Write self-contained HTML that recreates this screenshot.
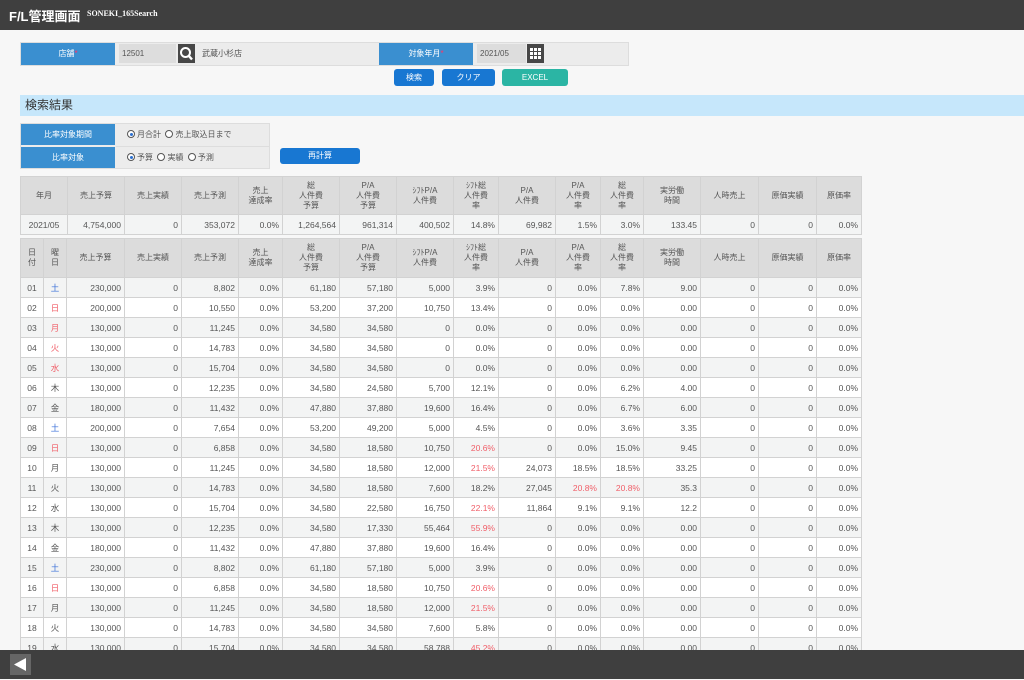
<!DOCTYPE html>
<html><head><meta charset="utf-8">
<style>
*{box-sizing:border-box;margin:0;padding:0}
body{width:1024px;height:679px;overflow:hidden;background:#f7f7f7;font-family:"Liberation Sans","Noto Sans CJK JP",sans-serif;color:#555;position:relative}
.top{position:absolute;left:0;top:0;width:1024px;height:30px;background:#3f3f3f;color:#fff}
.top .t{position:absolute;left:9px;top:6px;font-size:13px;font-weight:bold}
.top .s{position:absolute;left:87px;top:9px;font-size:8px;font-weight:bold;font-family:"Liberation Serif",serif}
.abs{position:absolute}
.lbl{background:#3a8fd0;color:#fff;font-size:8px;text-align:center}
.lbl i{color:#f36;font-style:normal}
.btn{position:absolute;border-radius:3px;color:#fff;font-size:8px;text-align:center;line-height:17px}
.main{position:absolute;left:0;top:30px;width:1024px;height:620px;overflow:hidden}
table{border-collapse:collapse;table-layout:fixed;position:absolute;left:20px;font-size:8.5px}
td,th{border:1px solid #d2d2d2;padding:0 3px;white-space:nowrap;overflow:hidden}
th{background:#dcdcdc;font-weight:normal;line-height:10px;text-align:center;color:#555;font-size:8px}
td{height:20px;text-align:right}
tr.g td{background:#f3f4f4}
tr.w td{background:#fff}
td.c{text-align:center}
.r{color:#f0606a}.b{color:#3a6fd8}
.foot{position:absolute;left:0;top:650px;width:1024px;height:29px;background:#3f3f3f}
.radio{display:inline-block;width:8px;height:8px;border:1px solid #555;border-radius:50%;vertical-align:-1px;margin-right:2px;position:relative;background:#fff}
.radio.on::after{content:"";position:absolute;left:1.5px;top:1.5px;width:3px;height:3px;border-radius:50%;background:#2a6fd0}
</style></head><body>
<div class="top"><span class="t">F/L管理画面</span><span class="s">SONEKI_165Search</span></div>

<div class="abs" style="left:20px;top:42px;width:609px;height:24px;background:#ececec;border:1px solid #ddd"></div>
<div class="abs lbl" style="left:21px;top:43px;width:94px;height:22px;line-height:22px">店舗<i>*</i></div>
<div class="abs" style="left:119px;top:44px;width:57px;height:19px;background:#ddd;font-size:8px;line-height:19px;padding-left:3px">12501</div>
<div class="abs" style="left:178px;top:44px;width:17px;height:19px;background:#474747">
<svg width="17" height="19" viewBox="0 0 17 19"><circle cx="7.5" cy="8.5" r="4.5" fill="none" stroke="#fff" stroke-width="2"/><line x1="10.5" y1="11.5" x2="14" y2="15.5" stroke="#fff" stroke-width="2.4"/></svg></div>
<div class="abs" style="left:202px;top:44px;font-size:8px;line-height:19px">武蔵小杉店</div>
<div class="abs lbl" style="left:379px;top:43px;width:94px;height:22px;line-height:22px">対象年月<i>*</i></div>
<div class="abs" style="left:477px;top:44px;width:49px;height:19px;background:#ddd;font-size:8px;line-height:19px;padding-left:3px">2021/05</div>
<div class="abs" style="left:527px;top:44px;width:17px;height:19px;background:#474747">
<svg width="17" height="19" viewBox="0 0 17 19" fill="#fff"><rect x="3" y="4" width="3" height="3"/><rect x="7" y="4" width="3" height="3"/><rect x="11" y="4" width="3" height="3"/><rect x="3" y="8" width="3" height="3"/><rect x="7" y="8" width="3" height="3"/><rect x="11" y="8" width="3" height="3"/><rect x="3" y="12" width="3" height="3"/><rect x="7" y="12" width="3" height="3"/><rect x="11" y="12" width="3" height="3"/></svg></div>

<div class="btn" style="left:394px;top:69px;width:40px;height:17px;background:#1877d2">検索</div>
<div class="btn" style="left:442px;top:69px;width:53px;height:17px;background:#1877d2">クリア</div>
<div class="btn" style="left:502px;top:69px;width:66px;height:17px;background:#2bb5a4">EXCEL</div>

<div class="abs" style="left:20px;top:95px;width:1004px;height:21px;background:#c6e7fb;font-size:12px;line-height:21px;padding-left:5px;color:#333">検索結果</div>

<div class="abs" style="left:20px;top:123px;width:250px;height:46px;background:#ececec;border:1px solid #ddd"></div>
<div class="abs lbl" style="left:21px;top:124px;width:94px;height:21px;line-height:21px">比率対象期間</div>
<div class="abs lbl" style="left:21px;top:147px;width:94px;height:21px;line-height:21px">比率対象</div>
<div class="abs" style="left:116px;top:146px;width:154px;height:1px;background:#ddd"></div>
<div class="abs" style="left:127px;top:124px;font-size:8px;line-height:21px"><span class="radio on"></span>月合計 &nbsp;<span class="radio"></span>売上取込日まで</div>
<div class="abs" style="left:127px;top:147px;font-size:8px;line-height:21px"><span class="radio on"></span>予算 &nbsp;<span class="radio"></span>実績 &nbsp;<span class="radio"></span>予測</div>
<div class="btn" style="left:280px;top:148px;width:80px;height:16px;line-height:16px;background:#1877d2">再計算</div>

<div class="main">
<table style="top:146px;width:841px">
<colgroup><col style="width:47px"><col style="width:57px"><col style="width:57px"><col style="width:57px"><col style="width:44px"><col style="width:57px"><col style="width:57px"><col style="width:57px"><col style="width:45px"><col style="width:57px"><col style="width:45px"><col style="width:43px"><col style="width:57px"><col style="width:58px"><col style="width:58px"><col style="width:45px"></colgroup>
<tr style="height:38px"><th>年月</th><th>売上予算</th><th>売上実績</th><th>売上予測</th><th>売上<br>達成率</th><th>総<br>人件費<br>予算</th><th>P/A<br>人件費<br>予算</th><th>ｼﾌﾄP/A<br>人件費</th><th>ｼﾌﾄ総<br>人件費<br>率</th><th>P/A<br>人件費</th><th>P/A<br>人件費<br>率</th><th>総<br>人件費<br>率</th><th>実労働<br>時間</th><th>人時売上</th><th>原価実績</th><th>原価率</th></tr>
<tr class="g"><td class="c">2021/05</td><td>4,754,000</td><td>0</td><td>353,072</td><td>0.0%</td><td>1,264,564</td><td>961,314</td><td>400,502</td><td>14.8%</td><td>69,982</td><td>1.5%</td><td>3.0%</td><td>133.45</td><td>0</td><td>0</td><td>0.0%</td></tr>
</table>

<table style="top:208px;width:841px">
<colgroup><col style="width:23px"><col style="width:23px"><col style="width:58px"><col style="width:57px"><col style="width:57px"><col style="width:44px"><col style="width:57px"><col style="width:57px"><col style="width:57px"><col style="width:45px"><col style="width:57px"><col style="width:45px"><col style="width:43px"><col style="width:57px"><col style="width:58px"><col style="width:58px"><col style="width:45px"></colgroup>
<tr style="height:39px"><th>日<br>付</th><th>曜<br>日</th><th>売上予算</th><th>売上実績</th><th>売上予測</th><th>売上<br>達成率</th><th>総<br>人件費<br>予算</th><th>P/A<br>人件費<br>予算</th><th>ｼﾌﾄP/A<br>人件費</th><th>ｼﾌﾄ総<br>人件費<br>率</th><th>P/A<br>人件費</th><th>P/A<br>人件費<br>率</th><th>総<br>人件費<br>率</th><th>実労働<br>時間</th><th>人時売上</th><th>原価実績</th><th>原価率</th></tr>
<tr class="g"><td class="c">01</td><td class="c b">土</td><td>230,000</td><td>0</td><td>8,802</td><td>0.0%</td><td>61,180</td><td>57,180</td><td>5,000</td><td>3.9%</td><td>0</td><td>0.0%</td><td>7.8%</td><td>9.00</td><td>0</td><td>0</td><td>0.0%</td></tr>
<tr class="w"><td class="c">02</td><td class="c r">日</td><td>200,000</td><td>0</td><td>10,550</td><td>0.0%</td><td>53,200</td><td>37,200</td><td>10,750</td><td>13.4%</td><td>0</td><td>0.0%</td><td>0.0%</td><td>0.00</td><td>0</td><td>0</td><td>0.0%</td></tr>
<tr class="g"><td class="c">03</td><td class="c r">月</td><td>130,000</td><td>0</td><td>11,245</td><td>0.0%</td><td>34,580</td><td>34,580</td><td>0</td><td>0.0%</td><td>0</td><td>0.0%</td><td>0.0%</td><td>0.00</td><td>0</td><td>0</td><td>0.0%</td></tr>
<tr class="w"><td class="c">04</td><td class="c r">火</td><td>130,000</td><td>0</td><td>14,783</td><td>0.0%</td><td>34,580</td><td>34,580</td><td>0</td><td>0.0%</td><td>0</td><td>0.0%</td><td>0.0%</td><td>0.00</td><td>0</td><td>0</td><td>0.0%</td></tr>
<tr class="g"><td class="c">05</td><td class="c r">水</td><td>130,000</td><td>0</td><td>15,704</td><td>0.0%</td><td>34,580</td><td>34,580</td><td>0</td><td>0.0%</td><td>0</td><td>0.0%</td><td>0.0%</td><td>0.00</td><td>0</td><td>0</td><td>0.0%</td></tr>
<tr class="w"><td class="c">06</td><td class="c">木</td><td>130,000</td><td>0</td><td>12,235</td><td>0.0%</td><td>34,580</td><td>24,580</td><td>5,700</td><td>12.1%</td><td>0</td><td>0.0%</td><td>6.2%</td><td>4.00</td><td>0</td><td>0</td><td>0.0%</td></tr>
<tr class="g"><td class="c">07</td><td class="c">金</td><td>180,000</td><td>0</td><td>11,432</td><td>0.0%</td><td>47,880</td><td>37,880</td><td>19,600</td><td>16.4%</td><td>0</td><td>0.0%</td><td>6.7%</td><td>6.00</td><td>0</td><td>0</td><td>0.0%</td></tr>
<tr class="w"><td class="c">08</td><td class="c b">土</td><td>200,000</td><td>0</td><td>7,654</td><td>0.0%</td><td>53,200</td><td>49,200</td><td>5,000</td><td>4.5%</td><td>0</td><td>0.0%</td><td>3.6%</td><td>3.35</td><td>0</td><td>0</td><td>0.0%</td></tr>
<tr class="g"><td class="c">09</td><td class="c r">日</td><td>130,000</td><td>0</td><td>6,858</td><td>0.0%</td><td>34,580</td><td>18,580</td><td>10,750</td><td class="r">20.6%</td><td>0</td><td>0.0%</td><td>15.0%</td><td>9.45</td><td>0</td><td>0</td><td>0.0%</td></tr>
<tr class="w"><td class="c">10</td><td class="c">月</td><td>130,000</td><td>0</td><td>11,245</td><td>0.0%</td><td>34,580</td><td>18,580</td><td>12,000</td><td class="r">21.5%</td><td>24,073</td><td>18.5%</td><td>18.5%</td><td>33.25</td><td>0</td><td>0</td><td>0.0%</td></tr>
<tr class="g"><td class="c">11</td><td class="c">火</td><td>130,000</td><td>0</td><td>14,783</td><td>0.0%</td><td>34,580</td><td>18,580</td><td>7,600</td><td>18.2%</td><td>27,045</td><td class="r">20.8%</td><td class="r">20.8%</td><td>35.3</td><td>0</td><td>0</td><td>0.0%</td></tr>
<tr class="w"><td class="c">12</td><td class="c">水</td><td>130,000</td><td>0</td><td>15,704</td><td>0.0%</td><td>34,580</td><td>22,580</td><td>16,750</td><td class="r">22.1%</td><td>11,864</td><td>9.1%</td><td>9.1%</td><td>12.2</td><td>0</td><td>0</td><td>0.0%</td></tr>
<tr class="g"><td class="c">13</td><td class="c">木</td><td>130,000</td><td>0</td><td>12,235</td><td>0.0%</td><td>34,580</td><td>17,330</td><td>55,464</td><td class="r">55.9%</td><td>0</td><td>0.0%</td><td>0.0%</td><td>0.00</td><td>0</td><td>0</td><td>0.0%</td></tr>
<tr class="w"><td class="c">14</td><td class="c">金</td><td>180,000</td><td>0</td><td>11,432</td><td>0.0%</td><td>47,880</td><td>37,880</td><td>19,600</td><td>16.4%</td><td>0</td><td>0.0%</td><td>0.0%</td><td>0.00</td><td>0</td><td>0</td><td>0.0%</td></tr>
<tr class="g"><td class="c">15</td><td class="c b">土</td><td>230,000</td><td>0</td><td>8,802</td><td>0.0%</td><td>61,180</td><td>57,180</td><td>5,000</td><td>3.9%</td><td>0</td><td>0.0%</td><td>0.0%</td><td>0.00</td><td>0</td><td>0</td><td>0.0%</td></tr>
<tr class="w"><td class="c">16</td><td class="c r">日</td><td>130,000</td><td>0</td><td>6,858</td><td>0.0%</td><td>34,580</td><td>18,580</td><td>10,750</td><td class="r">20.6%</td><td>0</td><td>0.0%</td><td>0.0%</td><td>0.00</td><td>0</td><td>0</td><td>0.0%</td></tr>
<tr class="g"><td class="c">17</td><td class="c">月</td><td>130,000</td><td>0</td><td>11,245</td><td>0.0%</td><td>34,580</td><td>18,580</td><td>12,000</td><td class="r">21.5%</td><td>0</td><td>0.0%</td><td>0.0%</td><td>0.00</td><td>0</td><td>0</td><td>0.0%</td></tr>
<tr class="w"><td class="c">18</td><td class="c">火</td><td>130,000</td><td>0</td><td>14,783</td><td>0.0%</td><td>34,580</td><td>34,580</td><td>7,600</td><td>5.8%</td><td>0</td><td>0.0%</td><td>0.0%</td><td>0.00</td><td>0</td><td>0</td><td>0.0%</td></tr>
<tr class="g"><td class="c">19</td><td class="c">水</td><td>130,000</td><td>0</td><td>15,704</td><td>0.0%</td><td>34,580</td><td>34,580</td><td>58,788</td><td class="r">45.2%</td><td>0</td><td>0.0%</td><td>0.0%</td><td>0.00</td><td>0</td><td>0</td><td>0.0%</td></tr>
</table>
</div>

<div class="foot"><div class="abs" style="left:10px;top:4px;width:21px;height:21px;background:#666">
<svg width="21" height="21" viewBox="0 0 21 21"><polygon points="4,10.5 16,4 16,17" fill="#fff"/></svg></div></div>
</body></html>
